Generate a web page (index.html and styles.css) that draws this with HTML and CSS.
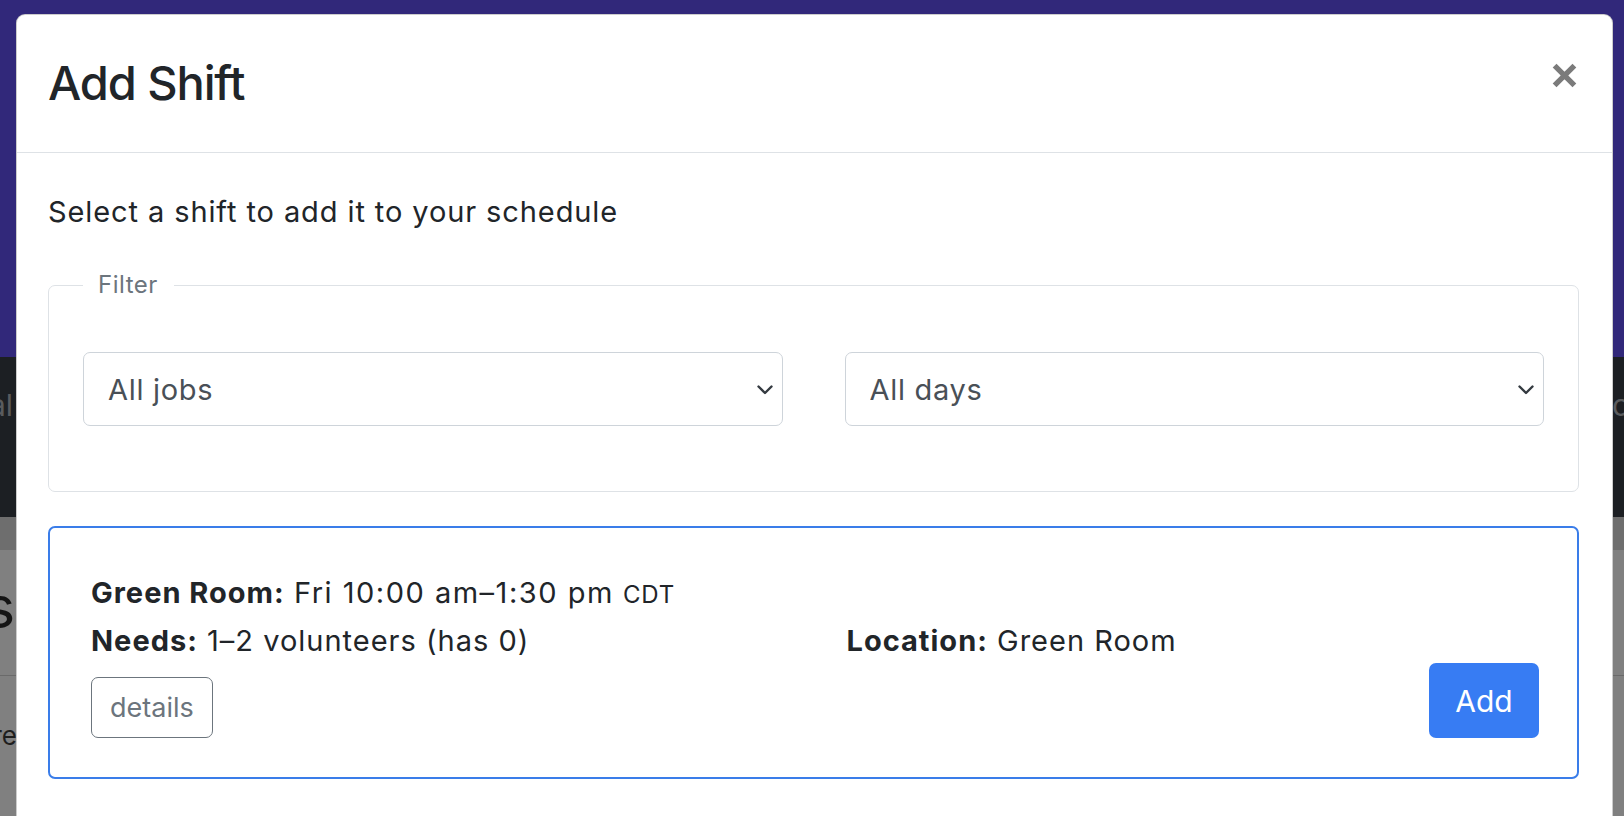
FILE: index.html
```html
<!DOCTYPE html>
<html lang="en">
<head>
<meta charset="utf-8">
<title>Add Shift</title>
<link rel="stylesheet" href="styles.css">
</head>
<body>
<div class="page">
  <div class="nav-top"></div>
  <div class="nav-dark">
    <span class="peek-left">Journal</span>
    <span class="peek-right">contact</span>
  </div>
  <div class="band"></div>
  <div class="content">
    <div class="content-head"><span class="peek-big">Shifts</span></div>
    <div class="content-row"><span class="peek-text">Here are</span></div>
  </div>
</div>

<div class="modal" role="dialog" aria-labelledby="modal-title">
  <div class="modal-header">
    <h5 class="modal-title" id="modal-title">Add Shift</h5>
    <button class="btn-close" type="button" aria-label="Close">
      <svg width="25" height="25" viewBox="0 0 25 25" aria-hidden="true">
        <path d="M2.6 2.6 22.4 22.4M22.4 2.6 2.6 22.4" stroke="#7b7b7b" stroke-width="5.4" fill="none"/>
      </svg>
    </button>
  </div>
  <div class="modal-body">
    <p class="intro">Select a shift to add it to your schedule</p>
    <fieldset class="filter">
      <legend class="filter-legend">Filter</legend>
      <div class="filter-row">
        <div class="select-wrap">
          <select class="form-select"><option>All jobs</option></select>
          <svg class="chev" width="16" height="10" viewBox="0 0 16 10" aria-hidden="true"><path d="M1.5 1.5 8 8l6.5-6.5" stroke="#343a40" stroke-width="2.4" fill="none" stroke-linecap="round" stroke-linejoin="round"/></svg>
        </div>
        <div class="select-wrap">
          <select class="form-select"><option>All days</option></select>
          <svg class="chev" width="16" height="10" viewBox="0 0 16 10" aria-hidden="true"><path d="M1.5 1.5 8 8l6.5-6.5" stroke="#343a40" stroke-width="2.4" fill="none" stroke-linecap="round" stroke-linejoin="round"/></svg>
        </div>
      </div>
    </fieldset>

    <div class="shift-card">
      <div class="shift-grid">
        <div class="line1"><b>Green Room:</b> <span class="when">Fri 10:00 am–1:30 pm</span> <small>CDT</small></div>
        <div class="needs"><b>Needs:</b> 1–2 volunteers (has 0)</div>
        <div class="loc"><b>Location:</b> Green Room</div>
        <button class="btn-details" type="button">details</button>
        <button class="btn-add" type="button">Add</button>
      </div>
    </div>
  </div>
</div>
</body>
</html>
```

FILE: styles.css
```css
* { box-sizing: border-box; }
html, body { margin: 0; padding: 0; }
body {
  width: 1624px;
  height: 816px;
  overflow: hidden;
  font-family: Inter, "Noto Sans", "Liberation Sans", sans-serif;
  color: #212529;
  background: #808080;
  position: relative;
}

/* background page (under backdrop) */
.page { width: 100%; }
.nav-top { height: 357px; background: #31287a; }
.nav-dark {
  height: 160px;
  background: #1c1f23;
  display: flex;
  justify-content: space-between;
  align-items: flex-start;
  padding-top: 30px;
  font-size: 30px;
  color: #595b5e;
  overflow: hidden;
}
.peek-left { display: inline-block; width: 110px; margin-left: -97px; text-align: right; }
.peek-right { display: inline-block; width: 110px; margin-right: -98px; text-align: left; }
.band { height: 33px; background: #6e6e6e; }
.content { background: #808080; }
.content-head {
  height: 126px;
  border-bottom: 1px solid #6a6a6a;
  overflow: hidden;
  padding-top: 22px;
}
.peek-big { display: inline-block; width: 200px; margin-left: -185px; text-align: right; font-size: 58px; color: #141414; }
.content-row { padding-top: 44px; overflow: hidden; }
.peek-text { display: inline-block; width: 140px; margin-left: -123px; text-align: right; font-size: 26px; color: #1e1e1e; }

/* modal */
.modal {
  position: absolute;
  left: 16px;
  top: 14px;
  width: 1597px;
  height: 900px;
  background: #fff;
  border: 1px solid rgba(0, 0, 0, 0.2);
  border-radius: 9px;
}
.modal-header {
  height: 138px;
  border-bottom: 1px solid #dee2e6;
  display: flex;
  align-items: center;
  justify-content: space-between;
  padding: 0 35px 0 31px;
}
.modal-title {
  margin: 0;
  font-size: 47px;
  font-weight: 500;
  line-height: 1.2;
  letter-spacing: -1.1px;
}
.btn-close {
  align-self: flex-start;
  margin-top: 48px;
  padding: 0;
  border: 0;
  background: transparent;
  width: 25px;
  height: 25px;
  display: block;
}
.btn-close svg { display: block; }

.modal-body { padding: 38px 33px 0 31px; }
.intro {
  margin: 0 0 34px;
  font-size: 29px;
  line-height: 42px;
  letter-spacing: 0.9px;
}

.filter {
  margin: 0;
  border: 1px solid #dee2e6;
  border-radius: 7px;
  padding: 49px 34px 65px;
  min-width: 0;
}
.filter-legend {
  padding: 0 16px 0 15px;
  font-size: 24px;
  line-height: 36px;
  letter-spacing: 0.5px;
  color: #6c757d;
}
.filter-row {
  display: grid;
  grid-template-columns: 1fr 1fr;
  column-gap: 62px;
}
.select-wrap { position: relative; }
.form-select {
  display: block;
  width: 100%;
  height: 74px;
  appearance: none;
  -webkit-appearance: none;
  background: #fff;
  border: 1px solid #ced4da;
  border-radius: 7px;
  padding: 0 50px 0 24px;
  font-family: inherit;
  font-size: 29px;
  letter-spacing: 0.7px;
  color: #495057;
}
.chev {
  position: absolute;
  right: 10px;
  top: 33px;
  pointer-events: none;
}

.shift-card {
  margin-top: 34px;
  border: 2px solid #3a7de9;
  border-radius: 7px;
  padding: 41px 38px 39px 41px;
}
.shift-grid {
  display: grid;
  grid-template-columns: 1fr 1fr;
  grid-template-rows: 48px 48px auto;
  column-gap: 63px;
  font-size: 29px;
  line-height: 48px;
  letter-spacing: 1px;
}
.shift-grid b { font-weight: 700; }
.shift-grid small { font-size: 24px; letter-spacing: 0.8px; }
.line1 { grid-column: 1 / 3; grid-row: 1; white-space: nowrap; }
.line1 .when { letter-spacing: 1.5px; }
.needs { grid-column: 1; grid-row: 2; }
.loc { grid-column: 2; grid-row: 2; }
.btn-details {
  grid-column: 1;
  grid-row: 3;
  justify-self: start;
  margin-top: 12px;
  height: 61px;
  padding: 0 18px;
  background: #fff;
  border: 1.5px solid #6c757d;
  border-radius: 7px;
  color: #6c757d;
  font-family: inherit;
  font-size: 27px;
  letter-spacing: 0;
}
.btn-add {
  grid-column: 2;
  grid-row: 2 / 4;
  justify-self: end;
  align-self: end;
  width: 110px;
  height: 75px;
  padding: 0;
  border: 0;
  border-radius: 7px;
  background: #377cf3;
  color: #fff;
  font-family: inherit;
  font-size: 30px;
  letter-spacing: 0;
}
```
